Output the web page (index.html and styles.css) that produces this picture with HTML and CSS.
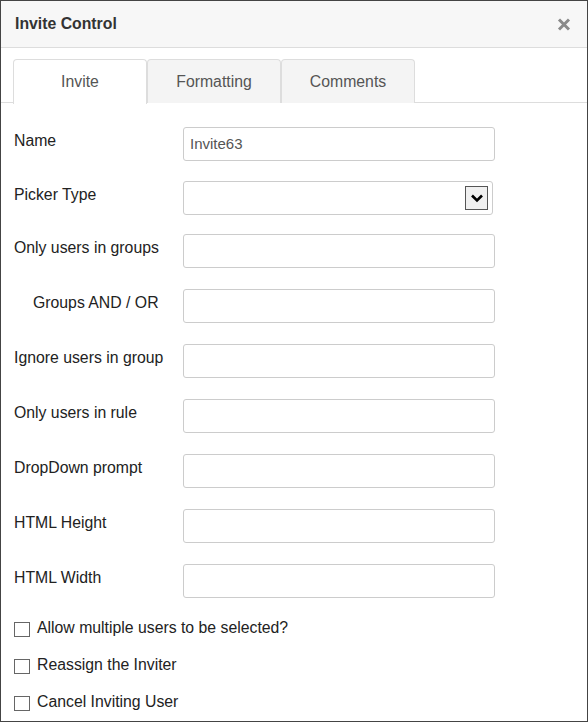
FILE: index.html
```html
<!DOCTYPE html>
<html>
<head>
<meta charset="utf-8">
<link rel="stylesheet" href="styles.css">
</head>
<body>
<div class="dialog">
  <div class="header">
    <span class="title">Invite Control</span>
    <svg class="close" width="14" height="13" viewBox="0 0 14 13"><path d="M2 1.5 L12 11.5 M12 1.5 L2 11.5" stroke="#8a8a8a" stroke-width="3" fill="none"/></svg>
  </div>
  <div class="tabs">
    <div class="tab active">Invite</div>
    <div class="tab">Formatting</div>
    <div class="tab">Comments</div>
  </div>
  <div class="form">
    <div class="row r54"><label class="lbl">Name</label><div class="input"><span class="val">Invite63</span></div></div>
    <div class="row r53"><label class="lbl">Picker Type</label><div class="input select"><span class="btn"><svg width="14" height="10" viewBox="0 0 14 10"><path d="M2 2.5 L7 7.5 L12 2.5" stroke="#000" stroke-width="2.6" fill="none"/></svg></span></div></div>
    <div class="row"><label class="lbl">Only users in groups</label><div class="input"></div></div>
    <div class="row"><label class="lbl indent">Groups AND / OR</label><div class="input"></div></div>
    <div class="row"><label class="lbl">Ignore users in group</label><div class="input"></div></div>
    <div class="row"><label class="lbl">Only users in rule</label><div class="input"></div></div>
    <div class="row"><label class="lbl">DropDown prompt</label><div class="input"></div></div>
    <div class="row"><label class="lbl">HTML Height</label><div class="input"></div></div>
    <div class="row last"><label class="lbl">HTML Width</label><div class="input"></div></div>
    <div class="checks">
      <div class="check"><span class="box"></span><span class="ctext">Allow multiple users to be selected?</span></div>
      <div class="check"><span class="box"></span><span class="ctext">Reassign the Inviter</span></div>
      <div class="check"><span class="box"></span><span class="ctext">Cancel Inviting User</span></div>
    </div>
  </div>
</div>
</body>
</html>
```

FILE: styles.css
```css
* { box-sizing: border-box; }
html, body { margin: 0; padding: 0; background: #fff; }
body { font-family: "Liberation Sans", Arial, sans-serif; font-size: 15.8px; color: #222; }
.dialog {
  width: 588px;
  height: 722px;
  border: 1px solid #444;
  overflow: hidden;
  background: #fff;
}
.header {
  height: 47px;
  background: #f7f7f7;
  border-bottom: 1px solid #ddd;
  display: flex;
  align-items: center;
  justify-content: space-between;
  padding: 0 16px 0 14px;
}
.title { font-weight: bold; color: #333; font-size: 15.8px; margin-top: -1px; }
.close { display: block; margin-top: 1px; }
.tabs {
  display: flex;
  padding: 11px 0 0 12px;
  border-bottom: 1px solid #ddd;
  height: 55px;
}
.tab {
  width: 134px;
  height: 44px;
  border: 1px solid #ddd;
  border-bottom: none;
  border-radius: 4px 4px 0 0;
  background: #f4f4f4;
  color: #555;
  display: flex;
  align-items: center;
  justify-content: center;
}
.tab.active { background: #fff; height: 45px; padding-bottom: 1px; }
.form { padding: 24px 0 0 13px; }
.row { display: flex; align-items: flex-start; height: 55px; }
.row.r54 { height: 54px; }
.row.r53 { height: 53px; }
.row.last { height: 46px; }
.lbl { width: 169px; line-height: 18px; margin-top: 5px; }
.lbl.indent { padding-left: 19px; }
.input {
  width: 312px;
  height: 34px;
  border: 1px solid #ccc;
  border-radius: 3px;
  display: flex;
  align-items: center;
  padding-left: 6px;
}
.val { color: #555; font-size: 15px; margin-top: -1px; }
.select { width: 310px; justify-content: flex-end; padding-right: 4px; }
.btn {
  width: 23px;
  height: 24px;
  background: #f0f0f0;
  border: 1px solid #555;
  display: flex;
  align-items: center;
  justify-content: center;
}
.btn svg { display: block; }
.check { display: flex; align-items: center; height: 37px; }
.check:first-child { height: 38px; }
.ctext { margin-top: -3px; }
.box {
  width: 16px;
  height: 15px;
  border: 1px solid #666;
  margin: 0 7px 0 0;
  background: #fff;
}
```
